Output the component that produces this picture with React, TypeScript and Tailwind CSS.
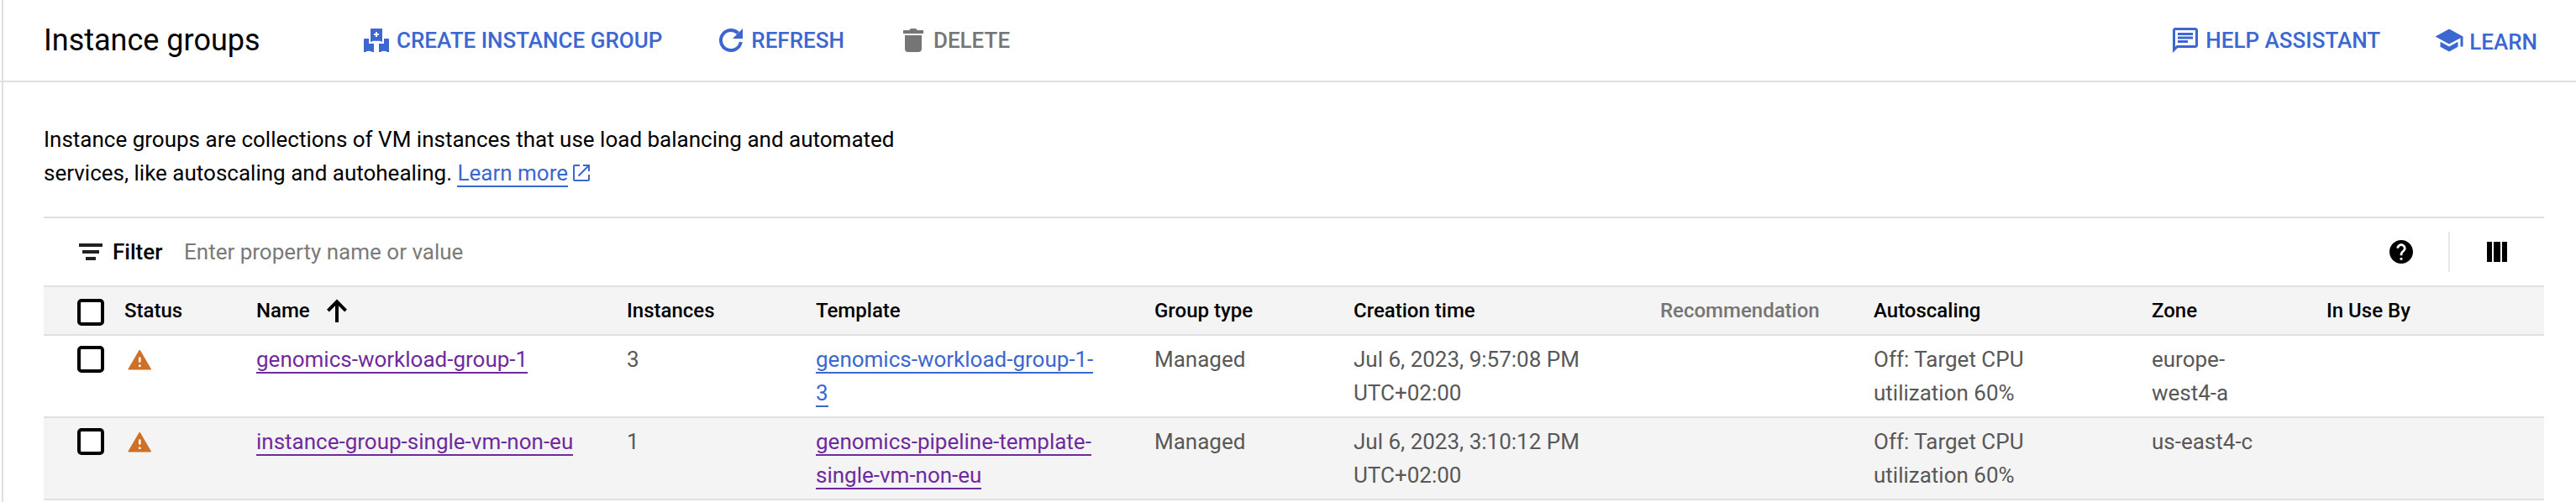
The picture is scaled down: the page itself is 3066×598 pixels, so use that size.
import type { ReactNode } from "react";

const ROW_GRID =
  "grid grid-cols-[56px_157px_441px_225px_403px_237px_364px_255px_331px_207px_1fr] pl-10 border-b-2 border-[#e0e0e0]";

function Icon({ children }: { children: ReactNode }) {
  return (
    <svg className="h-9 w-9 shrink-0" viewBox="0 0 36 36" fill="currentColor" aria-hidden="true">
      {children}
    </svg>
  );
}

function CreateGroupIcon() {
  return (
    <Icon>
      <g transform="translate(3 4)" fillRule="evenodd">
        <path d="M9 0h12a1 1 0 0 1 1 1v15l-3-1.2h-8L8 16V1a1 1 0 0 1 1-1zM14 4v2h-2v2h2v2h2V8h2V6h-2V4z" />
        <path d="M1 12h5v6h6v10h-2.2a4.2 2 0 0 0-7.6 0H0V13a1 1 0 0 1 1-1z" />
        <path d="M29 12h-5v6h-6v10h2.2a4.2 2 0 0 1 7.6 0H30V13a1 1 0 0 0-1-1z" />
      </g>
    </Icon>
  );
}

function RefreshIcon() {
  return (
    <Icon>
      <path d="M29.8 20A12 12 0 1 1 26.5 9.5" fill="none" stroke="currentColor" strokeWidth="4" />
      <path d="M32 4v12H20z" />
    </Icon>
  );
}

function DeleteIcon() {
  return (
    <Icon>
      <path d="M13 6l2-2h6l2 2h7v4H6V6zM8 12h20v16a4 4 0 0 1-4 4H12a4 4 0 0 1-4-4z" />
    </Icon>
  );
}

function ChatIcon() {
  return (
    <svg className="h-9 w-9 shrink-0" viewBox="0 0 24 24" fill="currentColor" aria-hidden="true">
      <path d="M4 4h16v12H5.17L4 17.17V4m0-2c-1.1 0-1.99.9-1.99 2L2 22l4-4h14c1.1 0 2-.9 2-2V4c0-1.1-.9-2-2-2H4zm2 10h8v2H6v-2zm0-3h12v2H6V9zm0-3h12v2H6V6z" />
    </svg>
  );
}

function SchoolIcon() {
  return (
    <svg className="h-9 w-9 shrink-0" viewBox="0 0 24 24" fill="currentColor" aria-hidden="true">
      <path d="M5 13.18v4L12 21l7-3.82v-4L12 17l-7-3.82zM12 3L1 9l11 6 9-4.91V17h2V9L12 3z" />
    </svg>
  );
}

function OpenInNewIcon() {
  return (
    <svg className="ml-1.5 inline-block h-5 w-5 align-[-1px]" viewBox="0 0 20 20" fill="none" stroke="currentColor" strokeWidth="2" aria-hidden="true">
      <path d="M8 1H2a1 1 0 0 0-1 1v16a1 1 0 0 0 1 1h16a1 1 0 0 0 1-1v-6" />
      <path d="M12 1h7v7M18.5 1.5L6.5 13.5" />
    </svg>
  );
}

function WarningIcon() {
  return (
    <svg className="mt-4 ml-1 h-[25px] w-[29px]" viewBox="0 0 29 25" aria-label="Warning">
      <path d="M14.2 1.6L27.2 23.8H1.2z" fill="#cf7029" stroke="#cf7029" strokeWidth="1.6" strokeLinejoin="round" />
      <path d="M13 9.5h2.6v6H13zM13 18.5h2.6v2.6H13z" fill="#fff" />
    </svg>
  );
}

function Checkbox({ className }: { className: string }) {
  return <span role="checkbox" aria-checked="false" className={"block h-8 w-8 rounded-[5px] border-4 border-black bg-white " + className} />;
}

function Action({ icon, label, className, labelClass = "" }: { icon: ReactNode; label: string; className: string; labelClass?: string }) {
  return (
    <button className={"flex items-center gap-1.5 text-[26px] leading-10 font-medium whitespace-nowrap " + className}>
      {icon}
      <span className={labelClass}>{label}</span>
    </button>
  );
}

function Link({ visited = false, children }: { visited?: boolean; children: ReactNode }) {
  return (
    <a className={visited ? "border-b-2 border-[#6f2a9e] text-[#6f2a9e]" : "border-b-2 border-[#3c67d1] text-[#3c67d1]"}>
      {children}
    </a>
  );
}

interface Group {
  name: string;
  instances: number;
  template: [string, string];
  templateVisited: boolean;
  created: string;
  zone: string[];
}

const groups: Group[] = [
  {
    name: "genomics-workload-group-1",
    instances: 3,
    template: ["genomics-workload-group-1-", "3"],
    templateVisited: false,
    created: "Jul 6, 2023, 9:57:08 PM",
    zone: ["europe-", "west4-a"],
  },
  {
    name: "instance-group-single-vm-non-eu",
    instances: 1,
    template: ["genomics-pipeline-template-", "single-vm-non-eu"],
    templateVisited: true,
    created: "Jul 6, 2023, 3:10:12 PM",
    zone: ["us-east4-c"],
  },
];

function GroupRow({ group, shaded }: { group: Group; shaded: boolean }) {
  return (
    <div className={ROW_GRID + " h-[98px] text-[26px] leading-10 whitespace-nowrap text-[#585858] " + (shaded ? "bg-[#f4f4f4]" : "bg-white")}>
      <Checkbox className="mt-3" />
      <WarningIcon />
      <div className="pt-2">
        <Link visited>{group.name}</Link>
      </div>
      <div className="pt-2">{group.instances}</div>
      <div className="pt-2">
        <Link visited={group.templateVisited}>
          {group.template[0]}
          <br />
          {group.template[1]}
        </Link>
      </div>
      <div className="pt-2">Managed</div>
      <div className="pt-2">
        {group.created}
        <br />
        UTC+02:00
      </div>
      <div />
      <div className="pt-2">
        Off: Target CPU
        <br />
        utilization 60%
      </div>
      <div className="pt-2">
        {group.zone.map((part) => (
          <div key={part}>{part}</div>
        ))}
      </div>
      <div />
    </div>
  );
}

export default function App() {
  return (
    <div className="h-[598px] w-[3066px] overflow-hidden bg-white font-[Roboto,sans-serif] text-black">
      <header className="h-[98px] border-b-2 border-[#e0e0e0] pl-0.5">
        <div className="flex h-24 items-center border-l-2 border-[#e0e0e0] pr-[46px] pl-12">
          <h1 className="w-[378px] text-[36px] leading-[42px]">Instance groups</h1>
          <div className="flex items-center gap-16">
            <Action icon={<CreateGroupIcon />} label="CREATE INSTANCE GROUP" className="text-[#3c67d1]" />
            <Action icon={<RefreshIcon />} label="REFRESH" className="text-[#3c67d1]" />
            <Action icon={<DeleteIcon />} label="DELETE" className="text-[#757575]" />
          </div>
          <div className="ml-auto flex items-center gap-16">
            <Action icon={<ChatIcon />} label="HELP ASSISTANT" className="text-[#3c67d1]" />
            <Action icon={<SchoolIcon />} label="LEARN" className="text-[#3c67d1]" labelClass="-mb-1" />
          </div>
        </div>
      </header>

      <main className="ml-0.5 h-[500px] border-l-2 border-[#e0e0e0] pt-12 pr-[38px] pl-12">
        <p className="h-20 text-[26px] leading-10 whitespace-nowrap">
          Instance groups are collections of VM instances that use load balancing and automated
          <br />
          services, like autoscaling and autohealing. <Link>Learn more</Link>
          <span className="text-[#3c67d1]">
            <OpenInNewIcon />
          </span>
        </p>

        <section className="mt-8 border-t-2 border-[#e0e0e0]">
          <div className="flex h-[82px] items-center border-b-2 border-[#e0e0e0] pr-11 pl-[42px] text-[26px] leading-10">
            <svg className="h-5 w-7 text-[#212121]" viewBox="0 0 28 20" fill="currentColor" aria-hidden="true">
              <path d="M0 0h28v4H0zM4 8h20v4H4zM8 16h12v4H8z" />
            </svg>
            <span className="ml-3 w-[85px] font-medium">Filter</span>
            <span className="text-[#7a7a7a]">Enter property name or value</span>
            <div className="ml-auto flex items-center">
              <svg className="h-[28px] w-[28px]" viewBox="2 2 20 20" fill="currentColor" aria-hidden="true">
                <path d="M12 2C6.48 2 2 6.48 2 12s4.48 10 10 10 10-4.48 10-10S17.52 2 12 2zm1 17h-2v-2h2v2zm2.07-7.75l-.9.92C13.45 12.9 13 13.5 13 15h-2v-.5c0-1.1.45-2.1 1.17-2.83l1.24-1.26c.37-.36.59-.86.59-1.41 0-1.1-.9-2-2-2s-2 .9-2 2H8c0-2.21 1.79-4 4-4s4 1.79 4 4c0 .88-.36 1.68-.93 2.25z" />
              </svg>
              <div className="ml-[42px] h-12 w-0.5 bg-[#e8e8e8]" />
              <svg className="ml-11 h-6 w-6" viewBox="0 0 24 24" fill="currentColor" aria-hidden="true">
                <path d="M0 0h6v24H0zM8 0h8v24H8zM18 0h6v24h-6z" />
              </svg>
            </div>
          </div>

          <div className={ROW_GRID + " h-[58px] bg-[#f4f4f4] text-[24px] leading-[56px] font-medium whitespace-nowrap"}>
            <Checkbox className="mt-3.5" />
            <div>Status</div>
            <div className="flex items-center">
              Name
              <svg className="-mt-px ml-5 h-7 w-6" viewBox="0 0 24 28" fill="none" stroke="currentColor" strokeWidth="4" aria-hidden="true">
                <path d="M12 28V3M1.4 14.2L12 3.4l10.6 10.8" />
              </svg>
            </div>
            <div>Instances</div>
            <div>Template</div>
            <div>Group type</div>
            <div>Creation time</div>
            <div className="pl-px text-[#757575]">Recommendation</div>
            <div>Autoscaling</div>
            <div>Zone</div>
            <div className="pl-px">In Use By</div>
          </div>

          {groups.map((group, i) => (
            <GroupRow key={group.name} group={group} shaded={i % 2 === 1} />
          ))}
        </section>
      </main>
    </div>
  );
}
